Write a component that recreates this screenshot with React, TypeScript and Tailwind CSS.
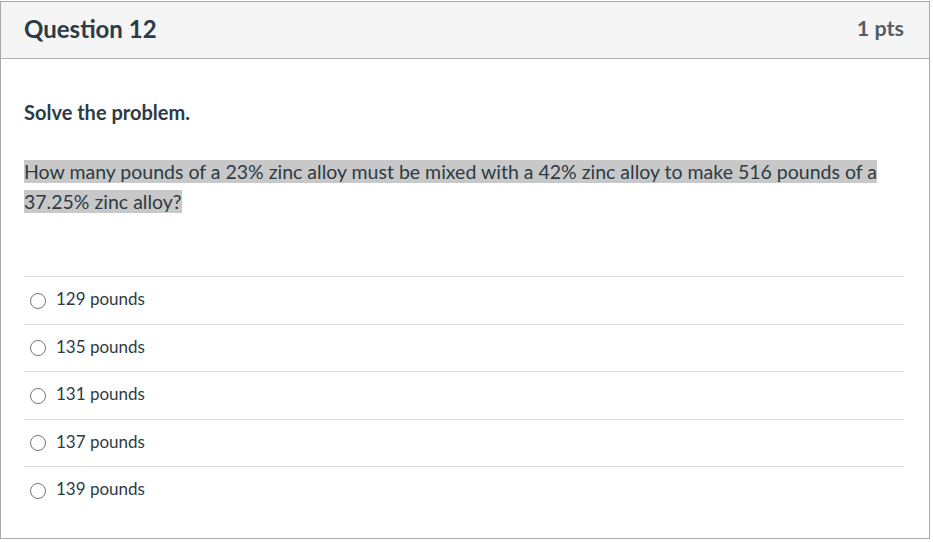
import React from "react";

const options = ["129 pounds", "135 pounds", "131 pounds", "137 pounds", "139 pounds"];

export default function App() {
  return (
    <div className="w-[933px] h-[542px] bg-white font-['Lato','Noto_Sans',sans-serif] text-[#2d3b45]">
      <div className="mt-px w-[930px] h-[538px] border border-[#a8a8a8] flex flex-col">
        <div className="h-[57px] bg-[#f5f5f5] border-b border-[#b3b3b3] flex items-center justify-between pl-[23px] pr-[25px] shrink-0">
          <span className="text-[24px] font-bold leading-none mt-[-2px]">Question 12</span>
          <span className="text-[21.5px] font-bold text-[#555e66] leading-none mt-[-2px]">1 pts</span>
        </div>
        <div className="px-[23px]">
          <div className="mt-[39px] text-[20px] font-bold leading-[28px]">Solve the problem.</div>
          <div className="mt-[31px] text-[19.5px] leading-[30px] pr-[20px]">
            <span className="bg-[#c8c8c8]">
              How many pounds of a 23% zinc alloy must be mixed with a 42% zinc alloy to make 516 pounds of a 37.25% zinc alloy?
            </span>
          </div>
          <div className="mt-[59px] mr-[2px]">
            {options.map((o) => (
              <div key={o} className="h-[47.5px] border-t border-[#dddddd] flex items-center pl-[6px] pb-[3px]">
                <span className="w-[16px] h-[16px] rounded-full border border-[#777] bg-white mr-[10px] mt-[4px]" />
                <span className="text-[17px]">{o}</span>
              </div>
            ))}
          </div>
        </div>
      </div>
    </div>
  );
}
